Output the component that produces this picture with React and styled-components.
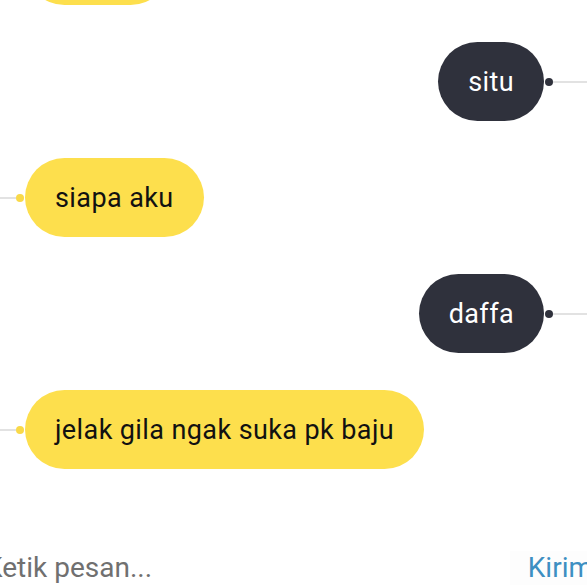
import styled, { createGlobalStyle } from "styled-components";

const GlobalStyle = createGlobalStyle`
  html, body {
    margin: 0;
    padding: 0;
    background: #ffffff;
    overflow: hidden;
  }
  * {
    box-sizing: border-box;
  }
`;

const Screen = styled.div`
  width: 587px;
  height: 587px;
  overflow: hidden;
  display: flex;
  flex-direction: column;
  background: #ffffff;
  font-family: Roboto, "Noto Sans", Arial, sans-serif;
`;

const MessageList = styled.div`
  display: flex;
  flex-direction: column;
  gap: 37px;
  margin-top: -74px;
`;

const Row = styled.div`
  display: flex;
  align-items: center;
  justify-content: ${(p) => (p.$mine ? "flex-end" : "flex-start")};
`;

const Line = styled.span`
  flex: 0 0 ${(p) => p.$w}px;
  height: 2px;
  background: #e2e2e2;
`;

const Dot = styled.span`
  flex: 0 0 8px;
  height: 8px;
  border-radius: 50%;
  background: ${(p) => (p.$mine ? "#2f313c" : "#f9d949")};
  margin: ${(p) => (p.$mine ? "0 0 0 1px" : "0 1px 0 0")};
`;

const Bubble = styled.div`
  height: 79px;
  padding: 0 30px;
  border-radius: 40px;
  display: flex;
  align-items: center;
  font-size: 27px;
  letter-spacing: 0.4px;
  background: ${(p) => (p.$mine ? "#2f313c" : "#fddf4d")};
  color: ${(p) => (p.$mine ? "#ffffff" : "#111111")};
  white-space: nowrap;
`;

const InputBar = styled.form`
  display: flex;
  align-items: center;
  justify-content: space-between;
  margin: 82px -6px 0 -15px;
  height: 34px;
`;

const TextInput = styled.input`
  border: none;
  outline: none;
  background: transparent;
  padding: 0;
  font-family: Roboto, Arial, sans-serif;
  font-size: 28px;
  line-height: 34px;
  color: #333;
  flex: 1;
  &::placeholder {
    color: #707070;
  }
`;

const SendButton = styled.button`
  border: none;
  background: #fdfdfd;
  padding: 0 0 0 18px;
  font-family: Roboto, Arial, sans-serif;
  font-size: 28px;
  line-height: 34px;
  color: #3d8fc2;
  cursor: pointer;
`;

const messages = [
  { id: 0, mine: false, text: "iya kak" },
  { id: 1, mine: true, text: "situ" },
  { id: 2, mine: false, text: "siapa aku" },
  { id: 3, mine: true, text: "daffa" },
  { id: 4, mine: false, text: "jelak gila ngak suka pk baju" },
];

function Message({ mine, text }) {
  if (mine) {
    return (
      <Row $mine>
        <Bubble $mine>{text}</Bubble>
        <Dot $mine />
        <Line $w={34} />
      </Row>
    );
  }
  return (
    <Row>
      <Line $w={16} />
      <Dot />
      <Bubble>{text}</Bubble>
    </Row>
  );
}

export default function App() {
  return (
    <Screen>
      <GlobalStyle />
      <MessageList>
        {messages.map((m) => (
          <Message key={m.id} mine={m.mine} text={m.text} />
        ))}
      </MessageList>
      <InputBar onSubmit={(e) => e.preventDefault()}>
        <TextInput type="text" placeholder="Ketik pesan..." />
        <SendButton type="submit">Kirim</SendButton>
      </InputBar>
    </Screen>
  );
}
